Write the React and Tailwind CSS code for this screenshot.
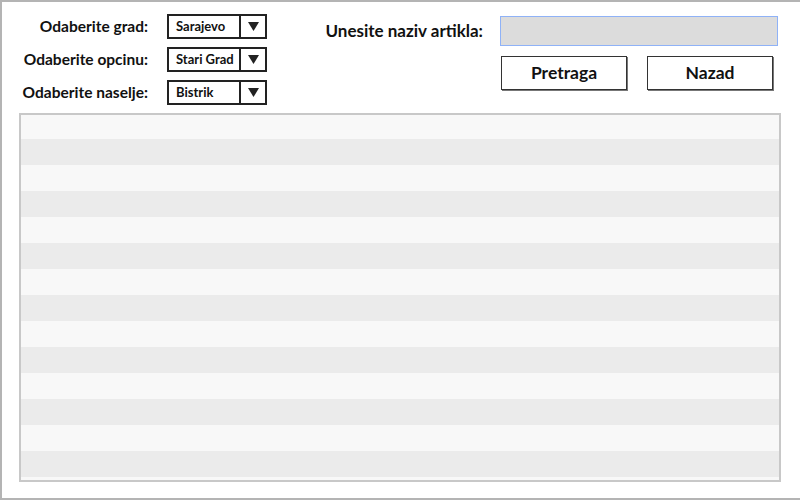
const font = { fontFamily: 'Lato, "Liberation Sans", sans-serif' };

function Select({ value }) {
  return (
    <div className="flex h-[25px] w-[100px] border-2 border-[#222] bg-white">
      <div className="flex flex-1 items-center whitespace-nowrap pl-[7px] text-[13px] font-bold text-[#111]">{value}</div>
      <div className="flex w-[26px] items-center justify-center border-l-2 border-[#222]">
        <svg width="11" height="9" viewBox="0 0 11 9">
          <path d="M0 0 H11 L5.5 9 Z" fill="#222" />
        </svg>
      </div>
    </div>
  );
}

function Button({ children }) {
  return (
    <button
      type="button"
      className="flex h-[34px] w-[126px] items-center justify-center border border-[#333] bg-white text-[17.5px] font-bold text-[#111] shadow-[1px_1px_0_#777]"
    >
      {children}
    </button>
  );
}

const filters = [
  ["Odaberite grad:", "Sarajevo"],
  ["Odaberite opcinu:", "Stari Grad"],
  ["Odaberite naselje:", "Bistrik"],
];

export default function App() {
  const rows = Array.from({ length: 15 });

  return (
    <div
      className="box-border flex h-[500px] w-[800px] flex-col border-b-2 border-l-2 border-t-2 border-[#b4b4b4] bg-white"
      style={font}
    >
      <div className="flex pt-[12px]">
        <div className="grid grid-cols-[146px_100px] gap-x-[19px] gap-y-[8px]">
          {filters.map(([label, value]) => (
            <div key={label} className="contents">
              <div className="flex h-[25px] items-center justify-end whitespace-nowrap text-[15.5px] font-bold text-[#111]">
                {label}
              </div>
              <Select value={value} />
            </div>
          ))}
        </div>

        <div className="ml-auto mr-[22px] mt-[2px] flex flex-col">
          <div className="flex items-center gap-[17px]">
            <span className="whitespace-nowrap text-[17px] font-bold text-[#111]">Unesite naziv artikla:</span>
            <div className="h-[30px] w-[278px] border border-[#8fb2f7] bg-[#dcdcdc]" />
          </div>
          <div className="mt-[10px] flex justify-end gap-[20px] pr-[5px]">
            <Button>Pretraga</Button>
            <Button>Nazad</Button>
          </div>
        </div>
      </div>

      <div className="ml-[17px] mt-[8px] flex h-[369px] w-[762px] flex-col overflow-hidden border-2 border-[#c8c8c8]">
        {rows.map((_, i) => (
          <div
            key={i}
            className={
              i === 0
                ? "h-[24px] shrink-0 bg-[#f8f8f8]"
                : i % 2 === 0
                  ? "h-[26px] shrink-0 bg-[#f8f8f8]"
                  : "h-[26px] shrink-0 bg-[#ebebeb]"
            }
          />
        ))}
      </div>
    </div>
  );
}
